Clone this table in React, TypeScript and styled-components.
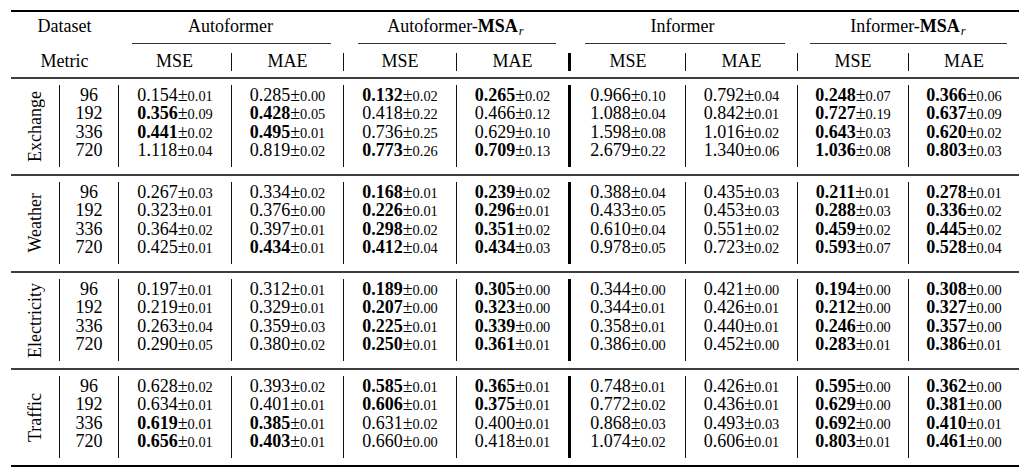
import React from "react";
import styled, { createGlobalStyle } from "styled-components";

const GlobalStyle = createGlobalStyle`
  html, body {
    margin: 0;
    padding: 0;
    background: #ffffff;
  }
  body {
    font-family: "Liberation Serif", "Times New Roman", serif;
    color: #000;
  }
`;

// column widths, left edge of each column carries its vertical rule
const COLS = "48px 59px 113px 112px 113px 112px 117px 112px 111px 111px";

type Line = "none" | "thin" | "thick";

const lineFor = (l: Line) =>
  l === "thick" ? "3px solid #000" : l === "thin" ? "1px solid #111" : "0 none transparent";

const Page = styled.div`
  width: 1025px;
  height: 473px;
  padding: 10px 0 0 11px;
  box-sizing: border-box;
  overflow: hidden;
`;

const Table = styled.div`
  width: 1008px;
`;

const Rule = styled.div<{ $heavy?: boolean }>`
  height: 2px;
  background: ${(p) => (p.$heavy ? "#000" : "#3e3e3e")};
`;

const HeadRow = styled.div`
  display: grid;
  grid-template-columns: ${COLS};
  font-size: 18px;
`;

const DatasetHead = styled.div`
  grid-column: span 2;
  height: 32px;
  line-height: 29px;
  text-align: center;
`;

const GroupHead = styled.div`
  grid-column: span 2;
  display: flex;
  flex-direction: column;
`;

const GroupTitle = styled.div`
  height: 31px;
  line-height: 29px;
  text-align: center;
  white-space: nowrap;
`;

const CMidRule = styled.div<{ $trim: number }>`
  height: 1px;
  background: #333;
  margin: 0 12px 0 ${(p) => p.$trim}px;
`;

const Sub = styled.span`
  font-style: italic;
  font-size: 12.6px;
  vertical-align: -3px;
  margin-left: 1px;
  line-height: 1;
`;

const MetricRow = styled.div`
  display: grid;
  grid-template-columns: ${COLS};
  padding: 9px 0 6px;
  font-size: 18px;
`;

const MetricLabel = styled.div`
  grid-column: span 2;
  height: 18px;
  line-height: 16px;
  text-align: center;
`;

const MetricCell = styled.div<{ $line: Line }>`
  height: 18px;
  line-height: 16px;
  text-align: center;
  box-sizing: border-box;
  border-left: ${(p) => lineFor(p.$line)};
`;

const Group = styled.div`
  display: grid;
  grid-template-columns: ${COLS};
  padding: 6px 0 7px;
  font-size: 18px;
`;

const LabelCell = styled.div`
  height: 82px;
  display: flex;
  align-items: center;
  justify-content: center;
`;

const Label = styled.span`
  writing-mode: vertical-rl;
  transform: rotate(180deg);
  line-height: 1;
  white-space: nowrap;
`;

const ValueCol = styled.div<{ $line: Line }>`
  height: 82px;
  padding-top: 1.5px;
  box-sizing: border-box;
  border-left: ${(p) => lineFor(p.$line)};
  display: flex;
  flex-direction: column;
  align-items: center;
`;

const Value = styled.div`
  height: 18.6px;
  line-height: 17.2px;
  white-space: nowrap;
`;

const Num = styled.span<{ $bold?: boolean }>`
  font-weight: ${(p) => (p.$bold ? 700 : 400)};
`;

const Std = styled.span`
  font-size: 14.4px;
  line-height: 1;
`;

const heads = [
  { title: <>Autoformer</>, trim: 14 },
  { title: <>Autoformer-<b>MSA</b><Sub>r</Sub></>, trim: 15 },
  { title: <>Informer</>, trim: 17 },
  { title: <>Informer-<b>MSA</b><Sub>r</Sub></>, trim: 13 },
];

const metricLines: Line[] = ["none", "thin", "thin", "thin", "thick", "thin", "thin", "thin"];
const valueLines: Line[] = ["thin", "thin", "thin", "thin", "thick", "thin", "thin", "thin"];

const horizons = ["96", "192", "336", "720"];

// "*" marks a bold mean
const data: { name: string; rows: string[][] }[] = [
  {
    name: "Exchange",
    rows: [
      ["0.154±0.01", "0.285±0.00", "*0.132±0.02", "*0.265±0.02", "0.966±0.10", "0.792±0.04", "*0.248±0.07", "*0.366±0.06"],
      ["*0.356±0.09", "*0.428±0.05", "0.418±0.22", "0.466±0.12", "1.088±0.04", "0.842±0.01", "*0.727±0.19", "*0.637±0.09"],
      ["*0.441±0.02", "*0.495±0.01", "0.736±0.25", "0.629±0.10", "1.598±0.08", "1.016±0.02", "*0.643±0.03", "*0.620±0.02"],
      ["1.118±0.04", "0.819±0.02", "*0.773±0.26", "*0.709±0.13", "2.679±0.22", "1.340±0.06", "*1.036±0.08", "*0.803±0.03"],
    ],
  },
  {
    name: "Weather",
    rows: [
      ["0.267±0.03", "0.334±0.02", "*0.168±0.01", "*0.239±0.02", "0.388±0.04", "0.435±0.03", "*0.211±0.01", "*0.278±0.01"],
      ["0.323±0.01", "0.376±0.00", "*0.226±0.01", "*0.296±0.01", "0.433±0.05", "0.453±0.03", "*0.288±0.03", "*0.336±0.02"],
      ["0.364±0.02", "0.397±0.01", "*0.298±0.02", "*0.351±0.02", "0.610±0.04", "0.551±0.02", "*0.459±0.02", "*0.445±0.02"],
      ["0.425±0.01", "*0.434±0.01", "*0.412±0.04", "*0.434±0.03", "0.978±0.05", "0.723±0.02", "*0.593±0.07", "*0.528±0.04"],
    ],
  },
  {
    name: "Electricity",
    rows: [
      ["0.197±0.01", "0.312±0.01", "*0.189±0.00", "*0.305±0.00", "0.344±0.00", "0.421±0.00", "*0.194±0.00", "*0.308±0.00"],
      ["0.219±0.01", "0.329±0.01", "*0.207±0.00", "*0.323±0.00", "0.344±0.01", "0.426±0.01", "*0.212±0.00", "*0.327±0.00"],
      ["0.263±0.04", "0.359±0.03", "*0.225±0.01", "*0.339±0.00", "0.358±0.01", "0.440±0.01", "*0.246±0.00", "*0.357±0.00"],
      ["0.290±0.05", "0.380±0.02", "*0.250±0.01", "*0.361±0.01", "0.386±0.00", "0.452±0.00", "*0.283±0.01", "*0.386±0.01"],
    ],
  },
  {
    name: "Traffic",
    rows: [
      ["0.628±0.02", "0.393±0.02", "*0.585±0.01", "*0.365±0.01", "0.748±0.01", "0.426±0.01", "*0.595±0.00", "*0.362±0.00"],
      ["0.634±0.01", "0.401±0.01", "*0.606±0.01", "*0.375±0.01", "0.772±0.02", "0.436±0.01", "*0.629±0.00", "*0.381±0.00"],
      ["*0.619±0.01", "*0.385±0.01", "0.631±0.02", "0.400±0.01", "0.868±0.03", "0.493±0.03", "*0.692±0.00", "*0.410±0.01"],
      ["*0.656±0.01", "*0.403±0.01", "0.660±0.00", "0.418±0.01", "1.074±0.02", "0.606±0.01", "*0.803±0.01", "*0.461±0.00"],
    ],
  },
];

const Cell = ({ v }: { v: string }) => {
  const bold = v.startsWith("*");
  const [mean, std] = v.replace("*", "").split("±");
  return (
    <Value>
      <Num $bold={bold}>{mean}</Num>±<Std>{std}</Std>
    </Value>
  );
};

export default function App() {
  return (
    <Page>
      <GlobalStyle />
      <Table>
        <Rule $heavy />
        <HeadRow>
          <DatasetHead>Dataset</DatasetHead>
          {heads.map((h, i) => (
            <GroupHead key={i}>
              <GroupTitle>{h.title}</GroupTitle>
              <CMidRule $trim={h.trim} />
            </GroupHead>
          ))}
        </HeadRow>
        <MetricRow>
          <MetricLabel>Metric</MetricLabel>
          {metricLines.map((l, i) => (
            <MetricCell key={i} $line={l}>
              {i % 2 === 0 ? "MSE" : "MAE"}
            </MetricCell>
          ))}
        </MetricRow>
        {data.map((d, gi) => (
          <React.Fragment key={d.name}>
            <Rule />
            <Group>
              <LabelCell>
                <Label>{d.name}</Label>
              </LabelCell>
              <ValueCol $line="thin">
                {horizons.map((h) => (
                  <Value key={h}>{h}</Value>
                ))}
              </ValueCol>
              {valueLines.map((l, ci) => (
                <ValueCol key={ci} $line={l}>
                  {d.rows.map((r, ri) => (
                    <Cell key={ri} v={r[ci]} />
                  ))}
                </ValueCol>
              ))}
            </Group>
            {gi === data.length - 1 && <Rule $heavy />}
          </React.Fragment>
        ))}
      </Table>
    </Page>
  );
}
